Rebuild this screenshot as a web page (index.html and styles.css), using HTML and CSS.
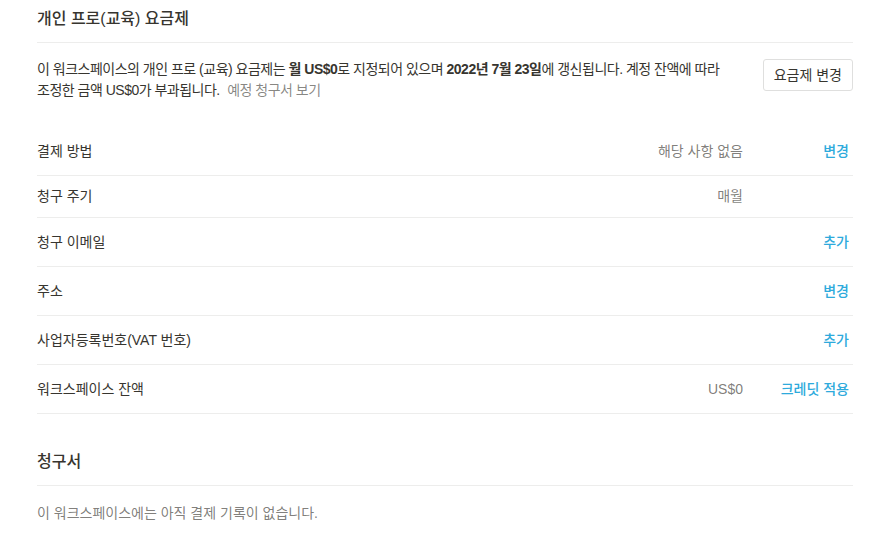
FILE: index.html
```html
<!DOCTYPE html>
<html lang="ko">
<head>
    <meta charset="UTF-8">
    <title>요금제</title>
    <link rel="stylesheet" href="styles.css">
</head>
<body>
    <div class="page">
        <div class="section-title">개인 프로(교육) 요금제</div>
        <div class="plan">
            <p class="plan-text">이 워크스페이스의 개인 프로 (교육) 요금제는 <b>월 US$0</b>로 지정되어 있으며 <b>2022년 7월 23일</b>에 갱신됩니다. 계정 잔액에 따라 조정한 금액 US$0가 부과됩니다. <a class="muted-link">예정 청구서 보기</a></p>
            <button class="plan-btn">요금제 변경</button>
        </div>

        <div class="rows">
            <div class="row">
                <div class="label">결제 방법</div>
                <div class="value">해당 사항 없음</div>
                <div class="action"><a>변경</a></div>
            </div>
            <div class="row">
                <div class="label">청구 주기</div>
                <div class="value">매월</div>
                <div class="action"></div>
            </div>
            <div class="row">
                <div class="label">청구 이메일</div>
                <div class="value"></div>
                <div class="action"><a>추가</a></div>
            </div>
            <div class="row">
                <div class="label">주소</div>
                <div class="value"></div>
                <div class="action"><a>변경</a></div>
            </div>
            <div class="row">
                <div class="label">사업자등록번호(VAT 번호)</div>
                <div class="value"></div>
                <div class="action"><a>추가</a></div>
            </div>
            <div class="row">
                <div class="label">워크스페이스 잔액</div>
                <div class="value">US$0</div>
                <div class="action"><a>크레딧 적용</a></div>
            </div>
        </div>

        <div class="section-title invoices">청구서</div>
        <p class="empty">이 워크스페이스에는 아직 결제 기록이 없습니다.</p>
    </div>
</body>
</html>
```

FILE: styles.css
```css
* {
    margin: 0;
    padding: 0;
    box-sizing: border-box;
}

body {
    background: #fff;
    color: #37352f;
    font-family: "Liberation Sans", "Noto Sans CJK KR", sans-serif;
    font-size: 14px;
    line-height: 21px;
}

.page {
    padding: 0 38px 0 37px;
}

.section-title {
    font-size: 16px;
    font-weight: 500;
    padding: 8px 0 13px;
    border-bottom: 1px solid #ededec;
}

.plan {
    display: flex;
    align-items: flex-start;
    gap: 32px;
    padding-top: 16px;
}

.plan-text {
    flex: 1;
    letter-spacing: -0.5px;
}

.plan-text b {
    font-weight: 700;
}

.muted-link {
    color: rgba(55, 53, 47, 0.6);
    margin-left: 4px;
}

.plan-btn {
    flex-shrink: 0;
    height: 32px;
    padding: 0 10px;
    background: #fff;
    border: 1px solid #dfdfde;
    border-radius: 3px;
    font: inherit;
    color: #37352f;
}

.rows {
    margin-top: 26px;
}

.row {
    display: flex;
    align-items: center;
    min-height: 42px;
    padding: 10px 0;
    border-bottom: 1px solid #ededec;
}

.row .label {
    flex: 1;
}

.row .value {
    color: rgba(55, 53, 47, 0.65);
    text-align: right;
}

.row .action {
    width: 110px;
    text-align: right;
}

.row .action a {
    display: inline-block;
    padding: 3px 4px;
    line-height: 22px;
    color: #2eaadc;
    font-weight: 500;
}

.invoices {
    margin-top: 29px;
}

.empty {
    padding-top: 17px;
    color: rgba(55, 53, 47, 0.65);
}
```
